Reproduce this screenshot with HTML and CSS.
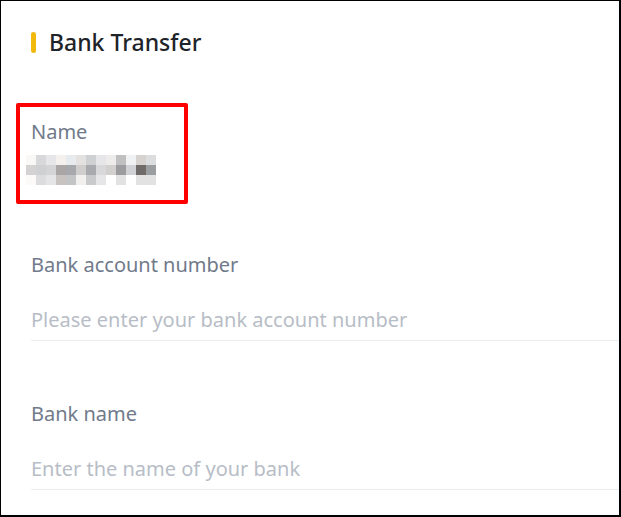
FILE: index.html
```html
<!DOCTYPE html>
<html lang="en">

<head>
    <meta charset="UTF-8">
    <meta name="viewport" content="width=device-width, initial-scale=1.0">
    <title>Bank Transfer</title>
    <link rel="stylesheet" href="styles.css">
</head>

<body>
    <div class="frame">
        <h2 class="title"><span class="titleBar"></span>Bank Transfer</h2>

        <div class="nameBox">
            <div class="label">Name</div>
            <div class="blurName">
                <span style="background:#f9f8f7"></span><span style="background:#d8d8da"></span><span style="background:#e6e6e8"></span><span style="background:#f4f0ee"></span><span style="background:#e8ebee"></span><span style="background:#e4e2e0"></span><span style="background:#cfd0d2"></span><span style="background:#e6e6e8"></span><span style="background:#eeeceb"></span><span style="background:#c0c0c0"></span><span style="background:#f0f1f3"></span><span style="background:#d6d2d0"></span><span style="background:#dcdddf"></span>
                <span style="background:#d4d2d3"></span><span style="background:#cfd0d2"></span><span style="background:#d4d4d6"></span><span style="background:#aaa6a5"></span><span style="background:#a6a8ab"></span><span style="background:#d0cecd"></span><span style="background:#a8aaad"></span><span style="background:#d8d8da"></span><span style="background:#d2cfcf"></span><span style="background:#9c9c9e"></span><span style="background:#cfd1d4"></span><span style="background:#6f6b69"></span><span style="background:#9a9ea1"></span>
                <span style="background:#fbfaf9"></span><span style="background:#dcdcde"></span><span style="background:#e5e5e7"></span><span style="background:#c8c2c0"></span><span style="background:#c2c4c6"></span><span style="background:#f2f0ee"></span><span style="background:#c8cacc"></span><span style="background:#e6e6e8"></span><span style="background:#ffffff"></span><span style="background:#e2e2e2"></span><span style="background:#ffffff"></span><span style="background:#e2e2e2"></span><span style="background:#e2e2e2"></span>
            </div>
        </div>

        <div class="field">
            <label class="label" for="accountNo">Bank account number</label>
            <input id="accountNo" class="input" type="text" placeholder="Please enter your bank account number">
        </div>

        <div class="field">
            <label class="label" for="bankName">Bank name</label>
            <input id="bankName" class="input" type="text" placeholder="Enter the name of your bank">
        </div>
    </div>
</body>

</html>
```

FILE: styles.css
```css
html,
body {
    margin: 0;
    background: #fff;
}

body {
    font-family: "Noto Sans", "Open Sans", sans-serif;
}

.frame {
    box-sizing: border-box;
    width: 621px;
    height: 517px;
    border-top: 1px solid #000;
    border-left: 1px solid #000;
    border-right: 2px solid #000;
    border-bottom: 2px solid #000;
    padding: 0 0 0 30px;
    overflow: hidden;
}

.title {
    display: flex;
    align-items: center;
    gap: 13px;
    margin: 26px 0 0 0;
    height: 30px;
    font-size: 23px;
    font-weight: 500;
    color: #1e2329;
}

.titleBar {
    width: 5px;
    height: 21px;
    border-radius: 3px;
    background: #f0b90b;
}

.nameBox {
    box-sizing: border-box;
    width: 172px;
    height: 101px;
    margin: 46px 0 0 -15px;
    border: 4px solid #ff0000;
    border-radius: 2px;
    padding: 12px 0 0 11px;
}

.label {
    display: block;
    font-size: 20px;
    line-height: 26px;
    color: #707a8a;
}

.blurName {
    display: grid;
    grid-template-columns: repeat(13, 10px);
    grid-auto-rows: 10px;
    margin: 10px 0 0 -5px;
}

.field {
    display: flex;
    flex-direction: column;
    margin-top: 48px;
}

.field + .field {
    margin-top: 60px;
}

.input {
    box-sizing: border-box;
    height: 42px;
    margin-top: 21px;
    padding: 0;
    border: none;
    border-bottom: 1px solid #eaecef;
    outline: none;
    font-family: inherit;
    font-size: 20px;
    color: #1e2329;
    background: transparent;
}

.input::placeholder {
    color: #b7bdc6;
}
```
